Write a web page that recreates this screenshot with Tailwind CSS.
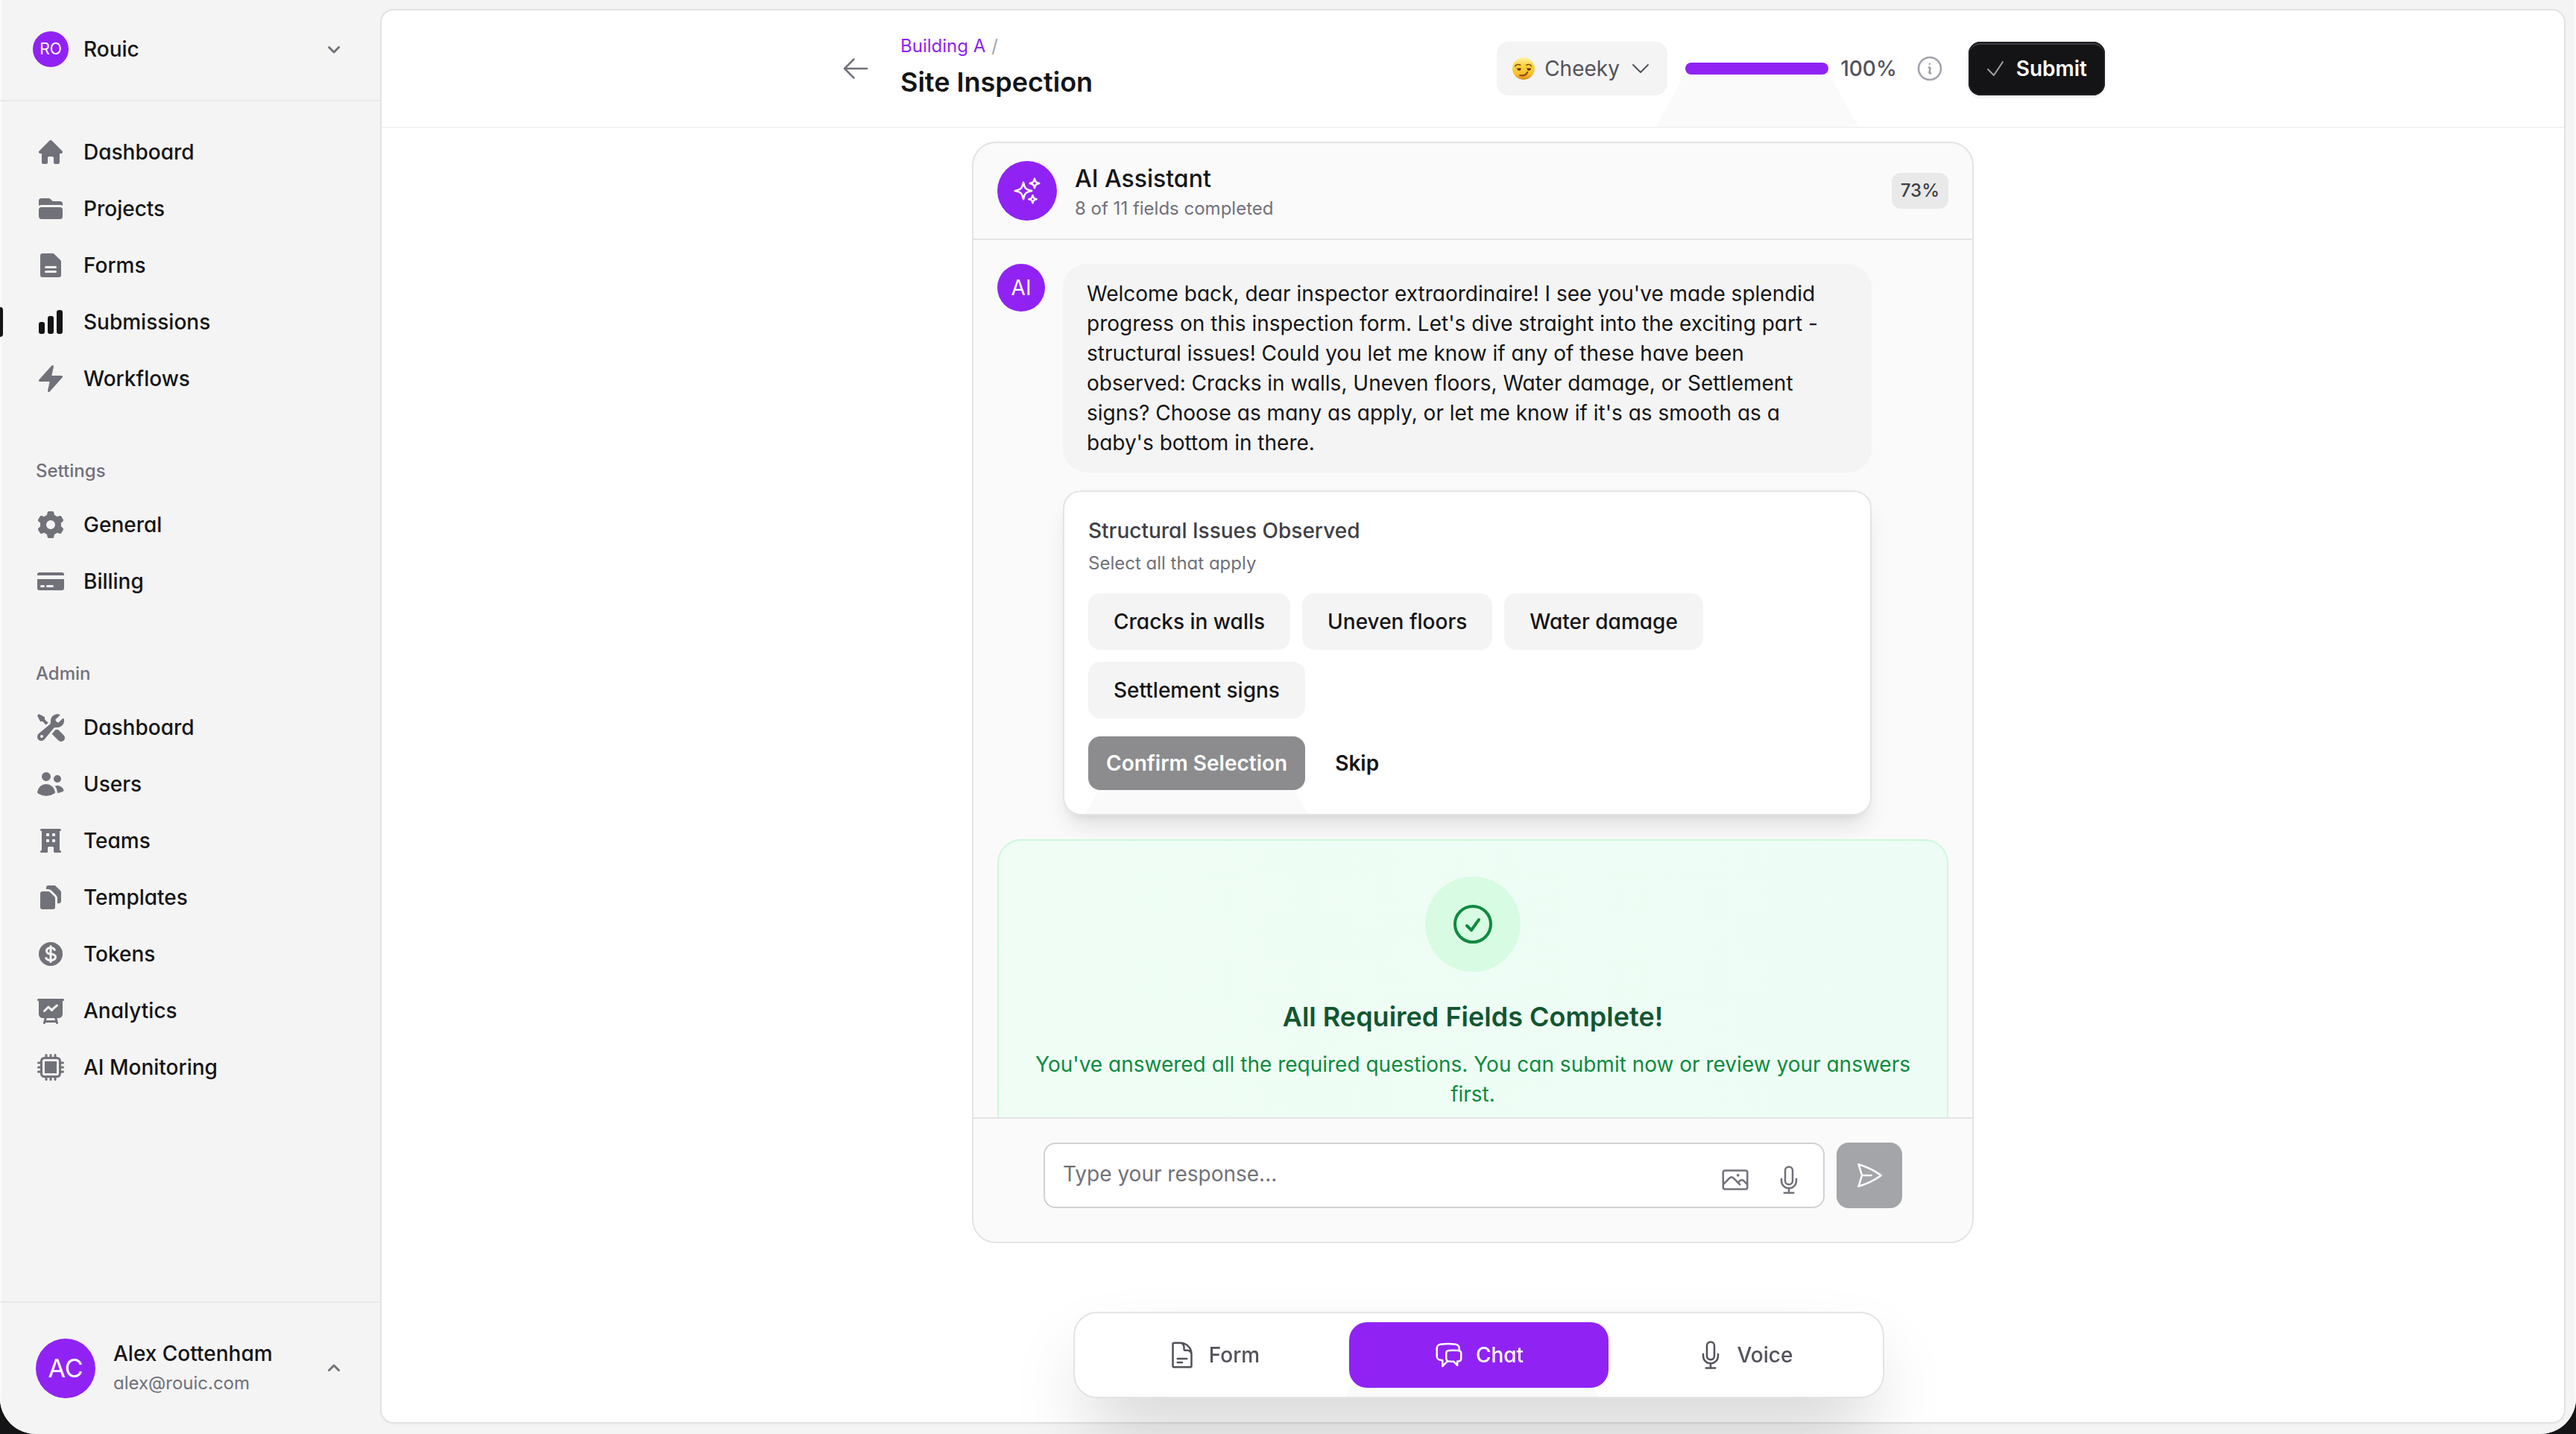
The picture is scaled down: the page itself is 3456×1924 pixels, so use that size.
<!DOCTYPE html>
<html lang="en">
<head>
<meta charset="utf-8">
<meta name="viewport" content="width=device-width, initial-scale=1">
<title>Site Inspection</title>
<script src="https://cdn.jsdelivr.net/npm/@tailwindcss/browser@4"></script>
</head>
<body class="bg-[#141416]">
<div class="flex h-screen rounded-b-[48px] bg-[#f4f4f4] font-['Inter',sans-serif] text-[28px]/[40px] text-[#141416] shadow-[inset_2px_0_#fafafa,inset_-2px_0_#fafafa] [font-feature-settings:'cv11']">

  <!-- Sidebar -->
  <aside class="flex w-[512px] shrink-0 flex-col font-medium">
    <div class="border-b-2 border-[#e9e9e9] px-8 pt-[30px] pb-8">
      <button type="button" class="flex h-[72px] w-full items-center gap-5 pr-4 pl-3 text-left">
        <span class="flex size-12 items-center justify-center rounded-full bg-[#9023f4] text-[21px]/[24px] font-normal text-white">RO</span>
        <span class="flex-1">Rouic</span>
        <svg class="size-8 text-[#71717a]" viewBox="0 0 16 16" fill="currentColor" aria-hidden="true"><path fill-rule="evenodd" d="M4.22 6.22a.75.75 0 0 1 1.06 0L8 8.94l2.72-2.72a.75.75 0 1 1 1.06 1.06l-3.25 3.25a.75.75 0 0 1-1.06 0L4.22 7.28a.75.75 0 0 1 0-1.06Z"/></svg>
      </button>
    </div>

    <nav class="flex flex-1 flex-col gap-16 pt-8">
      <div class="flex flex-col gap-1">
        <a href="#" class="flex items-center gap-6 px-12 py-4"><svg class="size-10 text-[#71717a]" viewBox="0 0 20 20" fill="currentColor" aria-hidden="true"><path fill-rule="evenodd" d="M9.293 2.293a1 1 0 0 1 1.414 0l7 7A1 1 0 0 1 17 11h-1v6a1 1 0 0 1-1 1h-2a1 1 0 0 1-1-1v-3a1 1 0 0 0-1-1H9a1 1 0 0 0-1 1v3a1 1 0 0 1-1 1H5a1 1 0 0 1-1-1v-6H3a1 1 0 0 1-.707-1.707l7-7Z"/></svg>Dashboard</a>
        <a href="#" class="flex items-center gap-6 px-12 py-4"><svg class="size-10 text-[#71717a]" viewBox="0 0 20 20" fill="currentColor" aria-hidden="true"><path d="M3.75 3A1.75 1.75 0 0 0 2 4.75v3.26a3.235 3.235 0 0 1 1.75-.51h12.5c.644 0 1.245.188 1.75.51V6.75A1.75 1.75 0 0 0 16.25 5h-4.836a.25.25 0 0 1-.177-.073L9.823 3.513A1.75 1.75 0 0 0 8.586 3H3.75ZM3.75 9A1.75 1.75 0 0 0 2 10.75v4.5c0 .966.784 1.75 1.75 1.75h12.5A1.75 1.75 0 0 0 18 15.25v-4.5A1.75 1.75 0 0 0 16.25 9H3.75Z"/></svg>Projects</a>
        <a href="#" class="flex items-center gap-6 px-12 py-4"><svg class="size-10 text-[#71717a]" viewBox="0 0 20 20" fill="currentColor" aria-hidden="true"><path fill-rule="evenodd" d="M4.5 2A1.5 1.5 0 0 0 3 3.5v13A1.5 1.5 0 0 0 4.5 18h11a1.5 1.5 0 0 0 1.5-1.5V7.621a1.5 1.5 0 0 0-.44-1.06l-4.12-4.122A1.5 1.5 0 0 0 11.378 2H4.5Zm2.25 8.5a.75.75 0 0 0 0 1.5h6.5a.75.75 0 0 0 0-1.5h-6.5Zm0 3a.75.75 0 0 0 0 1.5h6.5a.75.75 0 0 0 0-1.5h-6.5Z"/></svg>Forms</a>
        <a href="#" aria-current="page" class="relative flex items-center gap-6 px-12 py-4"><span class="absolute inset-y-4 left-0 w-1 rounded-r-sm bg-[#141416]"></span><svg class="size-10" viewBox="0 0 20 20" fill="currentColor" aria-hidden="true"><path d="M15.5 2A1.5 1.5 0 0 0 14 3.5v13a1.5 1.5 0 0 0 1.5 1.5h1a1.5 1.5 0 0 0 1.5-1.5v-13A1.5 1.5 0 0 0 16.5 2h-1ZM9.5 6A1.5 1.5 0 0 0 8 7.5v9A1.5 1.5 0 0 0 9.5 18h1a1.5 1.5 0 0 0 1.5-1.5v-9A1.5 1.5 0 0 0 10.5 6h-1ZM3.5 10A1.5 1.5 0 0 0 2 11.5v5A1.5 1.5 0 0 0 3.5 18h1A1.5 1.5 0 0 0 6 16.5v-5A1.5 1.5 0 0 0 4.5 10h-1Z"/></svg>Submissions</a>
        <a href="#" class="flex items-center gap-6 px-12 py-4"><svg class="size-10 text-[#71717a]" viewBox="0 0 20 20" fill="currentColor" aria-hidden="true"><path d="M11.983 1.907a.75.75 0 0 0-1.292-.657l-8.5 9.5A.75.75 0 0 0 2.75 12h6.572l-1.305 6.093a.75.75 0 0 0 1.292.657l8.5-9.5A.75.75 0 0 0 17.25 8h-6.572l1.305-6.093Z"/></svg>Workflows</a>
      </div>

      <div class="flex flex-col gap-1">
        <h3 class="mb-2 px-12 text-[24px]/[48px] text-[#71717a]">Settings</h3>
        <a href="#" class="flex items-center gap-6 px-12 py-4"><svg class="size-10 text-[#71717a]" viewBox="0 0 20 20" fill="currentColor" aria-hidden="true"><path fill-rule="evenodd" d="M7.84 1.804A1 1 0 0 1 8.82 1h2.36a1 1 0 0 1 .98.804l.331 1.652a6.993 6.993 0 0 1 1.929 1.115l1.598-.54a1 1 0 0 1 1.186.447l1.18 2.044a1 1 0 0 1-.205 1.251l-1.267 1.113a7.047 7.047 0 0 1 0 2.228l1.267 1.113a1 1 0 0 1 .206 1.25l-1.18 2.045a1 1 0 0 1-1.187.447l-1.598-.54a6.993 6.993 0 0 1-1.929 1.115l-.33 1.652a1 1 0 0 1-.98.804H8.82a1 1 0 0 1-.98-.804l-.331-1.652a6.993 6.993 0 0 1-1.929-1.115l-1.598.54a1 1 0 0 1-1.186-.447l-1.18-2.044a1 1 0 0 1 .205-1.251l1.267-1.114a7.05 7.05 0 0 1 0-2.227L1.821 7.773a1 1 0 0 1-.206-1.25l1.18-2.045a1 1 0 0 1 1.187-.447l1.598.54A6.992 6.992 0 0 1 7.51 3.456l.33-1.652ZM10 13a3 3 0 1 0 0-6 3 3 0 0 0 0 6Z"/></svg>General</a>
        <a href="#" class="flex items-center gap-6 px-12 py-4"><svg class="size-10 text-[#71717a]" viewBox="0 0 20 20" fill="currentColor" aria-hidden="true"><path fill-rule="evenodd" d="M2.5 4A1.5 1.5 0 0 0 1 5.5V6h18v-.5A1.5 1.5 0 0 0 17.5 4h-15ZM19 8.5H1v6A1.5 1.5 0 0 0 2.5 16h15a1.5 1.5 0 0 0 1.5-1.5v-6ZM3 13.25a.75.75 0 0 1 .75-.75h1.5a.75.75 0 0 1 0 1.5h-1.5a.75.75 0 0 1-.75-.75Zm4.75-.75a.75.75 0 0 0 0 1.5h3.5a.75.75 0 0 0 0-1.5h-3.5Z"/></svg>Billing</a>
      </div>

      <div class="flex flex-col gap-1">
        <h3 class="mb-2 px-12 text-[24px]/[48px] text-[#71717a]">Admin</h3>
        <a href="#" class="flex items-center gap-6 px-12 py-4"><svg class="size-10 text-[#71717a]" viewBox="0 0 20 20" fill="currentColor" aria-hidden="true"><path fill-rule="evenodd" d="M14.5 10a4.5 4.5 0 0 0 4.284-5.882c-.105-.324-.51-.391-.752-.15L15.34 6.66a.454.454 0 0 1-.493.11 3.01 3.01 0 0 1-1.618-1.616.455.455 0 0 1 .11-.494l2.694-2.692c.24-.241.174-.647-.15-.752a4.5 4.5 0 0 0-5.873 4.575c.055.873-.128 1.808-.8 2.368l-7.23 6.024a2.724 2.724 0 1 0 3.837 3.837l6.024-7.23c.56-.672 1.495-.855 2.368-.8.096.007.193.01.291.01ZM5 16a1 1 0 1 1-2 0 1 1 0 0 1 2 0Z"/><path d="M14.5 11.5c.173 0 .345-.007.514-.022l3.754 3.754a2.5 2.5 0 0 1-3.536 3.536l-4.41-4.41 2.172-2.607c.052-.063.147-.138.342-.196.202-.06.469-.087.777-.067.128.008.257.012.387.012ZM6 4.586l2.33 2.33a.452.452 0 0 1-.08.09L6.8 8.214 4.586 6H3.309a.5.5 0 0 1-.447-.276l-1.7-3.402a.5.5 0 0 1 .093-.577l.49-.49a.5.5 0 0 1 .577-.094l3.402 1.7A.5.5 0 0 1 6 3.31v1.277Z"/></svg>Dashboard</a>
        <a href="#" class="flex items-center gap-6 px-12 py-4"><svg class="size-10 text-[#71717a]" viewBox="0 0 20 20" fill="currentColor" aria-hidden="true"><path d="M7 8a3 3 0 1 0 0-6 3 3 0 0 0 0 6ZM14.5 9a2.5 2.5 0 1 0 0-5 2.5 2.5 0 0 0 0 5ZM1.615 16.428a1.224 1.224 0 0 1-.569-1.175 6.002 6.002 0 0 1 11.908 0c.058.467-.172.92-.57 1.174A9.953 9.953 0 0 1 7 18a9.953 9.953 0 0 1-5.385-1.572ZM14.5 16h-.106c.07-.297.088-.611.048-.933a7.47 7.47 0 0 0-1.588-3.755 4.502 4.502 0 0 1 5.874 2.636.818.818 0 0 1-.36.98A7.465 7.465 0 0 1 14.5 16Z"/></svg>Users</a>
        <a href="#" class="flex items-center gap-6 px-12 py-4"><svg class="size-10 text-[#71717a]" viewBox="0 0 20 20" fill="currentColor" aria-hidden="true"><path fill-rule="evenodd" d="M4 16.5v-13h-.25a.75.75 0 0 1 0-1.5h12.5a.75.75 0 0 1 0 1.5H16v13h.25a.75.75 0 0 1 0 1.5h-3.5a.75.75 0 0 1-.75-.75v-2.5a.75.75 0 0 0-.75-.75h-2.5a.75.75 0 0 0-.75.75v2.5a.75.75 0 0 1-.75.75h-3.5a.75.75 0 0 1 0-1.5H4Zm3-11a.5.5 0 0 1 .5-.5h1a.5.5 0 0 1 .5.5v1a.5.5 0 0 1-.5.5h-1a.5.5 0 0 1-.5-.5v-1ZM7.5 9a.5.5 0 0 0-.5.5v1a.5.5 0 0 0 .5.5h1a.5.5 0 0 0 .5-.5v-1a.5.5 0 0 0-.5-.5h-1ZM11 5.5a.5.5 0 0 1 .5-.5h1a.5.5 0 0 1 .5.5v1a.5.5 0 0 1-.5.5h-1a.5.5 0 0 1-.5-.5v-1Zm.5 3.5a.5.5 0 0 0-.5.5v1a.5.5 0 0 0 .5.5h1a.5.5 0 0 0 .5-.5v-1a.5.5 0 0 0-.5-.5h-1Z"/></svg>Teams</a>
        <a href="#" class="flex items-center gap-6 px-12 py-4"><svg class="size-10 text-[#71717a]" viewBox="0 0 20 20" fill="currentColor" aria-hidden="true"><path d="M7 3.5A1.5 1.5 0 0 1 8.5 2h3.879a1.5 1.5 0 0 1 1.06.44l3.122 3.12A1.5 1.5 0 0 1 17 6.622V12.5a1.5 1.5 0 0 1-1.5 1.5h-1v-3.379a3 3 0 0 0-.879-2.121L10.5 5.379A3 3 0 0 0 8.379 4.5H7v-1Z"/><path d="M4.5 6A1.5 1.5 0 0 0 3 7.5v9A1.5 1.5 0 0 0 4.5 18h7a1.5 1.5 0 0 0 1.5-1.5v-5.879a1.5 1.5 0 0 0-.44-1.06L9.44 6.439A1.5 1.5 0 0 0 8.378 6H4.5Z"/></svg>Templates</a>
        <a href="#" class="flex items-center gap-6 px-12 py-4"><svg class="size-10 text-[#71717a]" viewBox="0 0 20 20" fill="currentColor" aria-hidden="true"><path d="M10.75 10.818v2.614A3.13 3.13 0 0 0 11.888 13c.482-.315.612-.648.612-.875 0-.227-.13-.56-.612-.875a3.13 3.13 0 0 0-1.138-.432ZM8.33 8.62c.053.055.115.11.184.164.208.16.46.284.736.363V6.603a2.45 2.45 0 0 0-.35.13c-.14.065-.27.143-.386.233-.377.292-.514.627-.514.909 0 .184.058.39.202.592.037.051.08.102.128.152Z"/><path fill-rule="evenodd" d="M18 10a8 8 0 1 1-16 0 8 8 0 0 1 16 0Zm-8-6a.75.75 0 0 1 .75.75v.316a3.78 3.78 0 0 1 1.653.713c.426.33.744.74.925 1.2a.75.75 0 0 1-1.395.55 1.35 1.35 0 0 0-.447-.563 2.187 2.187 0 0 0-.736-.363V9.3c.698.093 1.383.32 1.959.696.787.514 1.29 1.27 1.29 2.13 0 .86-.504 1.616-1.29 2.13-.576.377-1.261.603-1.96.696v.299a.75.75 0 1 1-1.5 0v-.3c-.697-.092-1.382-.318-1.958-.695-.482-.315-.857-.717-1.078-1.188a.75.75 0 1 1 1.359-.636c.08.173.245.376.54.569.313.205.706.353 1.138.432v-2.748a3.782 3.782 0 0 1-1.653-.713C6.9 9.433 6.5 8.681 6.5 7.875c0-.805.4-1.558 1.097-2.096a3.78 3.78 0 0 1 1.653-.713V4.75A.75.75 0 0 1 10 4Z"/></svg>Tokens</a>
        <a href="#" class="flex items-center gap-6 px-12 py-4"><svg class="size-10 text-[#71717a]" viewBox="0 0 20 20" fill="currentColor" aria-hidden="true"><path fill-rule="evenodd" d="M1 2.75A.75.75 0 0 1 1.75 2h16.5a.75.75 0 0 1 0 1.5H18v8.75A2.75 2.75 0 0 1 15.25 15h-1.072l.798 3.06a.75.75 0 0 1-1.452.38L13.41 18H6.59l-.114.44a.75.75 0 0 1-1.452-.38L5.823 15H4.75A2.75 2.75 0 0 1 2 12.25V3.5h-.25A.75.75 0 0 1 1 2.75ZM7.373 15l-.391 1.5h6.037l-.392-1.5H7.373Zm7.49-8.931a.75.75 0 0 1-.175 1.046 19.326 19.326 0 0 0-3.398 3.098.75.75 0 0 1-1.097.04L8.5 8.561l-2.22 2.22A.75.75 0 1 1 5.22 9.72l2.75-2.75a.75.75 0 0 1 1.06 0l1.664 1.663a20.786 20.786 0 0 1 3.122-2.74.75.75 0 0 1 1.046.176Z"/></svg>Analytics</a>
        <a href="#" class="flex items-center gap-6 px-12 py-4"><svg class="size-10 text-[#71717a]" viewBox="0 0 20 20" fill="currentColor" aria-hidden="true"><path d="M14 6H6v8h8V6Z"/><path fill-rule="evenodd" d="M9.25 3V1.75a.75.75 0 0 1 1.5 0V3h1.5V1.75a.75.75 0 0 1 1.5 0V3h.5A2.75 2.75 0 0 1 17 5.75v.5h1.25a.75.75 0 0 1 0 1.5H17v1.5h1.25a.75.75 0 0 1 0 1.5H17v1.5h1.25a.75.75 0 0 1 0 1.5H17v.5A2.75 2.75 0 0 1 14.25 17h-.5v1.25a.75.75 0 0 1-1.5 0V17h-1.5v1.25a.75.75 0 0 1-1.5 0V17h-1.5v1.25a.75.75 0 0 1-1.5 0V17h-.5A2.75 2.75 0 0 1 3 14.25v-.5H1.75a.75.75 0 0 1 0-1.5H3v-1.5H1.75a.75.75 0 0 1 0-1.5H3v-1.5H1.75a.75.75 0 0 1 0-1.5H3v-.5A2.75 2.75 0 0 1 5.75 3h.5V1.75a.75.75 0 0 1 1.5 0V3h1.5ZM4.5 5.75c0-.69.56-1.25 1.25-1.25h8.5c.69 0 1.25.56 1.25 1.25v8.5c0 .69-.56 1.25-1.25 1.25h-8.5c-.69 0-1.25-.56-1.25-1.25v-8.5Z"/></svg>AI Monitoring</a>
      </div>
    </nav>

    <div class="border-t-2 border-[#e9e9e9] px-8 pt-8 pb-8">
      <button type="button" class="flex w-full items-center gap-6 p-4 text-left">
        <span class="flex size-20 items-center justify-center rounded-full bg-[#9023f4] text-[34px]/[40px] font-normal text-white">AC</span>
        <span class="flex-1">
          <span class="block">Alex Cottenham</span>
          <span class="block text-[24px]/[40px] font-normal text-[#71717a]">alex@rouic.com</span>
        </span>
        <svg class="size-8 text-[#71717a]" viewBox="0 0 16 16" fill="currentColor" aria-hidden="true"><path fill-rule="evenodd" d="M11.78 9.78a.75.75 0 0 1-1.06 0L8 7.06 5.28 9.78a.75.75 0 0 1-1.06-1.06l3.25-3.25a.75.75 0 0 1 1.06 0l3.25 3.25a.75.75 0 0 1 0 1.06Z"/></svg>
      </button>
    </div>
  </aside>

  <!-- Content card -->
  <main class="mt-[14px] mr-4 mb-4 flex min-w-0 flex-1 flex-col rounded-2xl bg-white shadow-[0_0_0_2px_#e3e3e4,0_2px_4px_#0000000d]">
    <header class="border-b-2 border-[#f3f3f3] py-8">
      <div class="mx-auto flex max-w-[1792px] items-center px-12">
        <a href="#" aria-label="Back" class="mr-10"><svg class="size-10 text-[#71717a]" viewBox="0 0 24 24" fill="none" stroke="currentColor" stroke-width="1.5" stroke-linecap="round" stroke-linejoin="round"><path d="M10.5 19.5 3 12m0 0 7.5-7.5M3 12h18"/></svg></a>
        <div class="flex flex-1 flex-col gap-1">
          <div class="flex gap-2 text-[24px]/[32px] text-[#a1a1aa]"><a href="#" class="text-[#9023f4]">Building A</a><span>/</span></div>
          <h1 class="text-[36px]/[56px] font-semibold">Site Inspection</h1>
        </div>
        <div class="relative mr-6">
          <select aria-label="Assistant tone" class="block h-[72px] appearance-none rounded-2xl bg-[#f4f4f4] pr-16 pl-16 font-normal text-[#52525b]"><option>Cheeky</option></select>
          <svg class="pointer-events-none absolute top-5 left-5 size-8" viewBox="0 0 30 30" aria-hidden="true">
            <defs><linearGradient id="face" x1="0" y1="0" x2="0" y2="1"><stop offset="0" stop-color="#fdf3a4"/><stop offset=".35" stop-color="#fbd442"/><stop offset=".75" stop-color="#f9bf2e"/><stop offset="1" stop-color="#dc8a17"/></linearGradient></defs>
            <circle cx="15" cy="15" r="14" fill="url(#face)"/>
            <g fill="none" stroke="#8a4a0c" stroke-linecap="round"><path stroke-width="1.5" d="M4.5 12c1.200-2.200 4-3 6.500-1.300M18.500 10.700c2.500-1.700 5.300-.9 6.500 1.300"/><path stroke-width="2" d="M10.500 23.500c4.500 1 8-.8 9.500-4"/></g>
            <path fill="#5c2f0a" d="M5.500 14.500h6.500c0 2-1.400 3-2.700 3s-2.100-1-2.100-2.200zM17.500 14.500H24.500c0 2-1.600 3-2.900 3s-2.100-1-2.100-2.200z"/>
          </svg>
          <svg class="pointer-events-none absolute top-5 right-5 size-8 text-[#52525b]" viewBox="0 0 24 24" fill="none" stroke="currentColor" stroke-width="1.5" stroke-linecap="round" stroke-linejoin="round" aria-hidden="true"><path d="m19.5 8.25-7.5 7.5-7.5-7.5"/></svg>
        </div>
        <div class="relative mr-4 h-4 w-48">
          <div class="absolute -inset-x-10 top-1/2 h-[78px] bg-[#fafafa] [clip-path:polygon(16%_0,84%_0,100%_100%,0_100%)]"></div>
          <div role="progressbar" aria-label="Form progress" aria-valuenow="100" aria-valuemin="0" aria-valuemax="100" class="relative h-4 rounded-full bg-[#9023f4]"></div>
        </div>
        <span class="mr-6 font-medium text-[#52525b]">100%</span>
        <button type="button" aria-label="Progress details" class="mr-8"><svg class="size-10 text-[#a1a1aa]" viewBox="0 0 24 24" fill="none" stroke="currentColor" stroke-width="1.5" stroke-linecap="round" stroke-linejoin="round"><path d="m11.25 11.25.041-.02a.75.75 0 0 1 1.063.852l-.708 2.836a.75.75 0 0 0 1.063.853l.041-.021M21 12a9 9 0 1 1-18 0 9 9 0 0 1 18 0Zm-9-3.75h.008v.008H12V8.25Z"/></svg></button>
        <button type="button" class="flex h-[72px] items-center gap-3 rounded-2xl bg-[#141416] pr-6 pl-5 font-semibold text-white shadow-[inset_0_0_0_2px_#1f1f24,inset_0_4px_#3a3a3f,0_2px_4px_#0000001a]"><svg class="size-8 text-[#a1a1aa]" viewBox="0 0 24 24" fill="none" stroke="currentColor" stroke-width="1.5" stroke-linecap="round" stroke-linejoin="round" aria-hidden="true"><path d="m4.5 12.75 6 6 9-13.5"/></svg>Submit</button>
      </div>
    </header>

    <div class="flex min-h-0 flex-1 flex-col items-center px-8 pt-[18px] pb-60">
      <section class="flex min-h-0 w-full max-w-[1344px] flex-1 flex-col overflow-hidden rounded-[32px] border-2 border-[#e4e4e5] bg-[#fafafa]">
        <div class="flex items-center gap-6 border-b-2 border-[#e4e4e5] px-8 py-6">
          <span class="flex size-20 items-center justify-center rounded-full bg-[#9023f4] text-white"><svg class="size-10" viewBox="0 0 24 24" fill="none" stroke="currentColor" stroke-width="1.5" stroke-linecap="round" stroke-linejoin="round" aria-hidden="true"><path d="M9.813 15.904 9 18.75l-.813-2.846a4.5 4.5 0 0 0-3.09-3.09L2.25 12l2.846-.813a4.5 4.5 0 0 0 3.09-3.09L9 5.25l.813 2.846a4.5 4.5 0 0 0 3.09 3.09L15.75 12l-2.846.813a4.5 4.5 0 0 0-3.09 3.09ZM18.259 8.715 18 9.75l-.259-1.035a3.375 3.375 0 0 0-2.455-2.456L14.25 6l1.036-.259a3.375 3.375 0 0 0 2.455-2.456L18 2.25l.259 1.035a3.375 3.375 0 0 0 2.456 2.456L21.75 6l-1.035.259a3.375 3.375 0 0 0-2.456 2.456ZM16.894 20.567 16.5 21.75l-.394-1.183a2.25 2.25 0 0 0-1.423-1.423L13.5 18.75l1.183-.394a2.25 2.25 0 0 0 1.423-1.423l.394-1.183.394 1.183a2.25 2.25 0 0 0 1.423 1.423l1.183.394-1.183.394a2.25 2.25 0 0 0-1.423 1.423Z"/></svg></span>
          <div class="flex-1">
            <h2 class="text-[32px]/[48px] font-medium">AI Assistant</h2>
            <p class="text-[24px]/[32px] text-[#71717a]">8 of 11 fields completed</p>
          </div>
          <span class="rounded-xl bg-[#e9e9e9] px-3 py-1 text-[24px]/[40px] font-medium text-[#3f3f46]">73%</span>
        </div>

        <div class="flex min-h-0 flex-1 flex-col gap-8 overflow-hidden p-8 pb-0">
          <div class="flex shrink-0 items-start gap-6">
            <span class="flex size-16 shrink-0 items-center justify-center rounded-full bg-[#9023f4] text-white">AI</span>
            <div class="flex w-[85%] flex-col gap-6">
              <p class="rounded-[32px] bg-[#f4f4f4] px-8 py-5">Welcome back, dear inspector extraordinaire! I see you've made splendid progress on this inspection form. Let's dive straight into the exciting part - structural issues! Could you let me know if any of these have been observed: Cracks in walls, Uneven floors, Water damage, or Settlement signs? Choose as many as apply, or let me know if it's as smooth as a baby's bottom in there.</p>
              <div class="rounded-3xl border-2 border-[#e4e4e5] bg-white p-8 shadow-[0_20px_30px_-6px_#0000001a,0_8px_12px_-8px_#0000001a]">
                <h3 class="font-medium text-[#3f3f46]">Structural Issues Observed</h3>
                <p class="mt-2 text-[24px]/[32px] text-[#71717a]">Select all that apply</p>
                <div class="mt-6 flex flex-wrap gap-4 font-medium">
                  <button type="button" aria-pressed="false" class="rounded-2xl border-2 border-transparent bg-[#f4f4f4] px-8 py-4">Cracks in walls</button>
                  <button type="button" aria-pressed="false" class="rounded-2xl border-2 border-transparent bg-[#f4f4f4] px-8 py-4">Uneven floors</button>
                  <button type="button" aria-pressed="false" class="rounded-2xl border-2 border-transparent bg-[#f4f4f4] px-8 py-4">Water damage</button>
                  <button type="button" aria-pressed="false" class="rounded-2xl border-2 border-transparent bg-[#f4f4f4] px-8 py-4">Settlement signs</button>
                </div>
                <div class="mt-6 flex gap-4 font-semibold">
                  <div class="relative">
                    <div class="absolute -inset-x-1 top-full h-8 bg-[#fafafa] [clip-path:polygon(6%_0,94%_0,100%_100%,0_100%)]"></div>
                    <button type="button" disabled class="rounded-2xl bg-[#8c8c8e] px-6 py-4 text-white">Confirm Selection</button>
                  </div>
                  <button type="button" class="rounded-2xl px-6 py-4">Skip</button>
                </div>
              </div>
            </div>
          </div>

          <div class="flex shrink-0 flex-col items-center rounded-[32px] border-2 border-[#cdf8dc] bg-linear-to-r from-[#effdf4] to-[#edfdf5] p-12 text-center">
            <span class="flex size-32 items-center justify-center rounded-full bg-[#d8fbe4] text-[#108a3e]"><svg class="size-16" viewBox="0 0 24 24" fill="none" stroke="currentColor" stroke-width="1.5" stroke-linecap="round" stroke-linejoin="round" aria-hidden="true"><path d="M9 12.75 11.25 15 15 9.75M21 12a9 9 0 1 1-18 0 9 9 0 0 1 18 0Z"/></svg></span>
            <h3 class="mt-8 text-[36px]/[56px] font-semibold text-[#125630]">All Required Fields Complete!</h3>
            <p class="mt-4 text-[#108a3e]">You've answered all the required questions. You can submit now or review your answers first.</p>
          </div>
        </div>

        <form class="flex justify-center border-t-2 border-[#e4e4e5] px-8 pt-8 pb-[45px]">
          <div class="flex w-full max-w-[1152px] gap-4">
            <div class="relative flex-1">
              <textarea aria-label="Your response" rows="1" placeholder="Type your response..." class="block h-[88px] w-full resize-none overflow-hidden rounded-2xl border-2 border-[#d1d1d3] bg-white py-5 pr-40 pl-6 placeholder:text-[#71717a]"></textarea>
              <div class="absolute right-3 bottom-0.5 flex text-[#71717a]">
                <button type="button" aria-label="Attach image" class="p-4"><svg class="size-10" viewBox="0 0 24 24" fill="none" stroke="currentColor" stroke-width="1.5" stroke-linecap="round" stroke-linejoin="round"><path d="m2.25 15.75 5.159-5.159a2.25 2.25 0 0 1 3.182 0l5.159 5.159m-1.5-1.5 1.409-1.409a2.25 2.25 0 0 1 3.182 0l2.909 2.909m-18 3.75h16.5a1.5 1.5 0 0 0 1.5-1.5V6a1.5 1.5 0 0 0-1.5-1.5H3.75A1.5 1.5 0 0 0 2.25 6v12a1.5 1.5 0 0 0 1.5 1.5Zm10.5-11.25h.008v.008h-.008V8.25Zm.375 0a.375.375 0 1 1-.75 0 .375.375 0 0 1 .75 0Z"/></svg></button>
                <button type="button" aria-label="Dictate" class="p-4"><svg class="size-10" viewBox="0 0 24 24" fill="none" stroke="currentColor" stroke-width="1.5" stroke-linecap="round" stroke-linejoin="round"><path d="M12 18.75a6 6 0 0 0 6-6v-1.5m-6 7.5a6 6 0 0 1-6-6v-1.5m6 7.5v3.75m-3.75 0h7.5M12 15.75a3 3 0 0 1-3-3V4.5a3 3 0 1 1 6 0v8.25a3 3 0 0 1-3 3Z"/></svg></button>
              </div>
            </div>
            <button type="submit" aria-label="Send" disabled class="flex size-[88px] items-center justify-center rounded-2xl bg-[#a4a5a9] text-white"><svg class="size-10" viewBox="0 0 24 24" fill="none" stroke="currentColor" stroke-width="1.5" stroke-linecap="round" stroke-linejoin="round"><path d="M6 12 3.269 3.125A59.769 59.769 0 0 1 21.485 12 59.768 59.768 0 0 1 3.27 20.875L5.999 12Zm0 0h7.5"/></svg></button>
          </div>
        </form>
      </section>
    </div>
  </main>

  <!-- Floating view switcher -->
  <div class="pointer-events-none fixed right-0 bottom-12 left-[512px] flex justify-center px-8">
    <div class="pointer-events-auto grid w-full max-w-[1088px] grid-cols-3 gap-2 rounded-[32px] border-2 border-[#e4e4e5] bg-white p-3 font-medium text-[#52525b] shadow-[0_50px_100px_-24px_#00000040]">
      <button type="button" class="flex h-[88px] items-center justify-center gap-4 rounded-3xl"><svg class="size-10" viewBox="0 0 24 24" fill="none" stroke="currentColor" stroke-width="1.5" stroke-linecap="round" stroke-linejoin="round" aria-hidden="true"><path d="M19.5 14.25v-2.625a3.375 3.375 0 0 0-3.375-3.375h-1.5A1.125 1.125 0 0 1 13.5 7.125v-1.5a3.375 3.375 0 0 0-3.375-3.375H8.25m0 12.75h7.5m-7.5 3H12M10.5 2.25H5.625c-.621 0-1.125.504-1.125 1.125v17.25c0 .621.504 1.125 1.125 1.125h12.75c.621 0 1.125-.504 1.125-1.125V11.25a9 9 0 0 0-9-9Z"/></svg>Form</button>
      <div class="relative">
        <div class="absolute -inset-x-1 top-1/2 -bottom-3 bg-[#fafafa] [clip-path:polygon(6%_0,89%_0,95%_100%,0_100%)]"></div>
        <button type="button" aria-pressed="true" class="relative flex h-[88px] w-full items-center justify-center gap-4 rounded-3xl bg-[#9023f4] text-white"><svg class="size-10" viewBox="0 0 24 24" fill="none" stroke="currentColor" stroke-width="1.5" stroke-linecap="round" stroke-linejoin="round" aria-hidden="true"><path d="M20.25 8.511c.884.284 1.5 1.128 1.5 2.097v4.286c0 1.136-.847 2.1-1.98 2.193-.34.027-.68.052-1.02.072v3.091l-3-3c-1.354 0-2.694-.055-4.02-.163a2.115 2.115 0 0 1-.825-.242m9.345-8.334a2.126 2.126 0 0 0-.476-.095 48.64 48.64 0 0 0-8.048 0c-1.131.094-1.976 1.057-1.976 2.192v4.286c0 .837.46 1.58 1.155 1.951m9.345-8.334V6.637c0-1.621-1.152-3.026-2.76-3.235A48.455 48.455 0 0 0 11.25 3c-2.115 0-4.198.137-6.24.402-1.608.209-2.76 1.614-2.76 3.235v6.226c0 1.621 1.152 3.026 2.76 3.235.577.075 1.157.14 1.74.194V21l4.155-4.155"/></svg>Chat</button>
      </div>
      <button type="button" class="flex h-[88px] items-center justify-center gap-4 rounded-3xl"><svg class="size-10" viewBox="0 0 24 24" fill="none" stroke="currentColor" stroke-width="1.5" stroke-linecap="round" stroke-linejoin="round" aria-hidden="true"><path d="M12 18.75a6 6 0 0 0 6-6v-1.5m-6 7.5a6 6 0 0 1-6-6v-1.5m6 7.5v3.75m-3.75 0h7.5M12 15.75a3 3 0 0 1-3-3V4.5a3 3 0 1 1 6 0v8.25a3 3 0 0 1-3 3Z"/></svg>Voice</button>
    </div>
  </div>
</div>
</body>
</html>
